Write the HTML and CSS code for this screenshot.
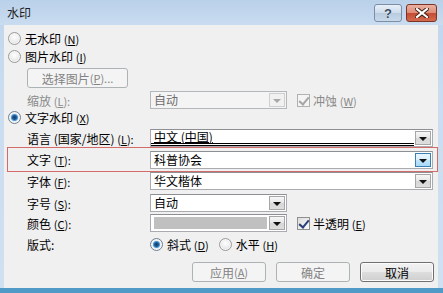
FILE: index.html
```html
<!DOCTYPE html>
<html lang="zh-CN">
<head>
<meta charset="utf-8">
<title>水印</title>
<link rel="stylesheet" href="styles.css">
</head>
<body>
<div class="window">
  <div class="titlebar">
    <span class="title">水印</span>
    <div class="caption-btns">
      <span class="cbtn help">?</span>
      <span class="cbtn close"><svg width="14" height="10" viewBox="0 0 14 10"><path d="M2 1 L12 9 M12 1 L2 9" stroke="#3a1a12" stroke-width="4" stroke-linecap="square"/><path d="M2 1 L12 9 M12 1 L2 9" stroke="#ffffff" stroke-width="2.2" stroke-linecap="square"/></svg></span>
    </div>
  </div>
  <div class="client">
    <div class="row r-radio"><span class="radio"></span><span class="lbl">无水印 <span class="k">(<u>N</u>)</span></span></div>
    <div class="row r-radio"><span class="radio"></span><span class="lbl">图片水印 <span class="k">(<u>I</u>)</span></span></div>
    <div class="row r-btn indent"><span class="btn disabled wide">选择图片 <span class="k">(<u>P</u>)...</span></span></div>
    <div class="row r-field indent">
      <span class="label disabled-text">缩放 <span class="k">(<u>L</u>):</span></span>
      <span class="combo short disabled"><span class="field">自动</span><span class="drop"><span class="arrow"></span></span></span>
      <span class="check checked disabled"></span><span class="clbl disabled-text">冲蚀 <span class="k">(<u>W</u>)</span></span>
    </div>
    <div class="row r-radio r5"><span class="radio on"></span><span class="lbl">文字水印 <span class="k">(<u>X</u>)</span></span></div>
    <div class="row r-field indent r6">
      <span class="label">语言 (国家/地区) <span class="k">(<u>L</u>):</span></span>
      <span class="combo long lang"><span class="field"><span class="ul">中文 (中国)</span></span><span class="drop"><span class="arrow"></span></span></span>
    </div>
    <div class="highlight">
      <span class="label">文字 <span class="k">(<u>T</u>):</span></span>
      <span class="combo long focus"><span class="field">科普协会</span><span class="drop"><span class="arrow"></span></span></span>
    </div>
    <div class="row r-field indent">
      <span class="label">字体 <span class="k">(<u>F</u>):</span></span>
      <span class="combo long"><span class="field">华文楷体</span><span class="drop"><span class="arrow"></span></span></span>
    </div>
    <div class="row r-field indent r9">
      <span class="label">字号 <span class="k">(<u>S</u>):</span></span>
      <span class="combo short"><span class="field">自动</span><span class="drop"><span class="arrow"></span></span></span>
    </div>
    <div class="row r-field indent r10">
      <span class="label">颜色 <span class="k">(<u>C</u>):</span></span>
      <span class="combo short"><span class="field"><span class="swatch"></span></span><span class="drop"><span class="arrow"></span></span></span>
      <span class="check checked"></span><span class="clbl">半透明 <span class="k">(<u>E</u>)</span></span>
    </div>
    <div class="row r-field indent r11">
      <span class="label">版式:</span>
      <span class="radio on"></span><span class="rl">斜式 <span class="k">(<u>D</u>)</span></span>
      <span class="radio second"></span><span class="rl">水平 <span class="k">(<u>H</u>)</span></span>
    </div>
    <div class="row r-buttons">
      <span class="btn disabled">应用 <span class="k">(<u>A</u>)</span></span>
      <span class="btn disabled">确定</span>
      <span class="btn">取消</span>
    </div>
  </div>
</div>
</body>
</html>
```

FILE: styles.css
```css
* { box-sizing: border-box; }
html, body { margin: 0; padding: 0; }
body {
  width: 443px;
  height: 293px;
  overflow: hidden;
  background: #ffffff;
  font-family: "Noto Sans CJK SC", "Liberation Sans", sans-serif;
  font-size: 12px;
  color: #000;
}
u { text-decoration: underline; text-underline-offset: 1px; }
.k { font-size: 11px; }

.window {
  width: 443px;
  height: 293px;
  display: flex;
  flex-direction: column;
  background: linear-gradient(#bfd4ec, #cadcef 30%, #cfe0f1);
  border-bottom: 5px solid #4f9ac6;
  position: relative;
}

.titlebar {
  height: 25px;
  display: flex;
  align-items: center;
  justify-content: space-between;
  padding: 0 6px 0 7px;
  background: linear-gradient(#bad1ea, #c9dcf0);
  flex: none;
}
.title { font-size: 12px; color: #1e1e1e; line-height: 16px; }
.caption-btns { display: flex; gap: 4px; align-items: center; margin-top: 1px; }
.cbtn {
  display: flex; align-items: center; justify-content: center;
  height: 18px;
  border-radius: 3px;
}
.help {
  width: 28px;
  background: linear-gradient(#e8eff8, #cddbeb 50%, #b8cbe0 51%, #c9d9ea);
  border: 1px solid #7c8ea6;
  font-family: "Liberation Sans", sans-serif;
  font-size: 13px;
  font-weight: bold;
  color: #3b4b63;
  text-shadow: 0 0 1px #fff;
}
.close {
  width: 31px;
  background: linear-gradient(#eab1a2, #dd8b77 50%, #c64a32 51%, #d26b50);
  border: 1px solid #7e3424;
}

.client {
  flex: 1;
  margin: 0 5px 0 4px;
  background: #f0f0f0;
  padding: 4px 0 0 4px;
  display: flex;
  flex-direction: column;
}

.row { display: flex; align-items: center; flex: none; }
.r-radio { height: 18px; }
.r-radio .lbl { margin-left: 4px; }
.r5 { height: 16px; }
.indent { padding-left: 19px; }
.r-btn { margin-top: 3px; height: 20px; }
.r-field { height: 18px; }
.r-btn + .r-field { margin-top: 3px; }
.r6 { margin-top: 4px; }
.r9 { margin-top: 4px; }
.r10 { margin-top: 2px; }
.r11 { margin-top: 3px; }

.label { width: 123px; flex: none; white-space: nowrap; }
.disabled-text { color: #8a8a8a; }

.radio {
  width: 13px; height: 13px; border-radius: 50%;
  flex: none;
  border: 1px solid #9a9a9a;
  background: radial-gradient(circle at 50% 40%, #ffffff 0, #f1f1f1 40%, #d4d4d4 100%);
  box-shadow: inset 0 0 0 1px #f6f6f6;
}
.radio.on {
  border-color: #6f7f92;
  background: radial-gradient(circle, #0e3b6a 0, #1f5d99 2px, #5ba0d6 3.2px, #e8eef4 4px, #e9ecef 100%);
}
.rl { margin-left: 4px; }
.radio.second { margin-left: 10px; }

.check {
  width: 13px; height: 13px; flex: none;
  border: 1px solid #8e8f8f;
  background: linear-gradient(135deg, #dcdcdc, #fbfbfb);
  margin-left: 10px;
  position: relative;
}
.check.checked::after {
  content: "";
  position: absolute;
  left: 3px; top: 0px;
  width: 4px; height: 8px;
  border-right: 2px solid #2a3f78;
  border-bottom: 2px solid #2a3f78;
  transform: rotate(40deg);
}
.check.disabled { border-color: #b1b1b1; background: #f4f4f4; }
.check.disabled::after { border-color: #a6a6a6; }
.clbl { margin-left: 3px; }

.combo {
  height: 18px;
  display: flex;
  border: 1px solid #a9abb0;
  border-top-color: #8d8f94;
  background: #ffffff;
  flex: none;
}
.combo.long { width: 283px; }
.combo.short { width: 137px; }
.combo .field {
  flex: 1;
  padding-left: 3px;
  line-height: 16px;
  white-space: nowrap;
  display: flex;
  align-items: center;
}
.combo .drop {
  width: 16px;
  margin: 1px;
  display: flex;
  align-items: center;
  justify-content: center;
  border: 1px solid #a6a6a6;
  background: linear-gradient(#f7f7f7, #e6e6e6 50%, #d6d6d6 51%, #dedede);
}
.arrow {
  width: 0; height: 0;
  border-left: 4px solid transparent;
  border-right: 4px solid transparent;
  border-top: 4px solid #111;
  margin-top: 2px;
}
.combo.disabled { background: #f4f4f4; border-color: #b5b8bb; color: #6d6d6d; }
.combo.disabled .drop { background: #f1f1f1; border-color: #cfcfcf; }
.combo.disabled .arrow { border-top-color: #a8a8a8; }
.combo.focus .drop {
  border-color: #3c7fb1;
  background: linear-gradient(#eaf6fd, #d9f0fc 50%, #bee6fd 51%, #a7d9f5);
}
.combo.lang .field {
  align-items: flex-start;
  line-height: 14px;
  border-bottom: 3px double #000;
  margin-bottom: 0;
}
.ul { text-decoration: underline; text-underline-offset: 0px; }
.swatch { display: block; width: 113px; height: 12px; background: #c0c0c0; margin-left: 0; }

.highlight {
  margin-left: -1px;
  width: 431px;
  height: 25px;
  border: 1px solid #d46b69;
  display: flex;
  align-items: center;
  padding-left: 19px;
  flex: none;
}

.r-buttons {
  margin-top: 9px;
  height: 20px;
  padding-left: 184px;
  gap: 10px;
}
.btn {
  height: 20px;
  width: 74px;
  display: flex;
  align-items: center;
  justify-content: center;
  border: 1px solid #707070;
  border-radius: 3px;
  background: linear-gradient(#f2f2f2, #ebebeb 50%, #dddddd 51%, #cfcfcf);
  box-shadow: inset 0 0 0 1px #fcfcfc;
  color: #000;
  white-space: nowrap;
}
.btn.disabled {
  border-color: #adb2b5;
  background: #f4f4f4;
  box-shadow: none;
  color: #838383;
}
.btn.wide { width: 101px; }
```
